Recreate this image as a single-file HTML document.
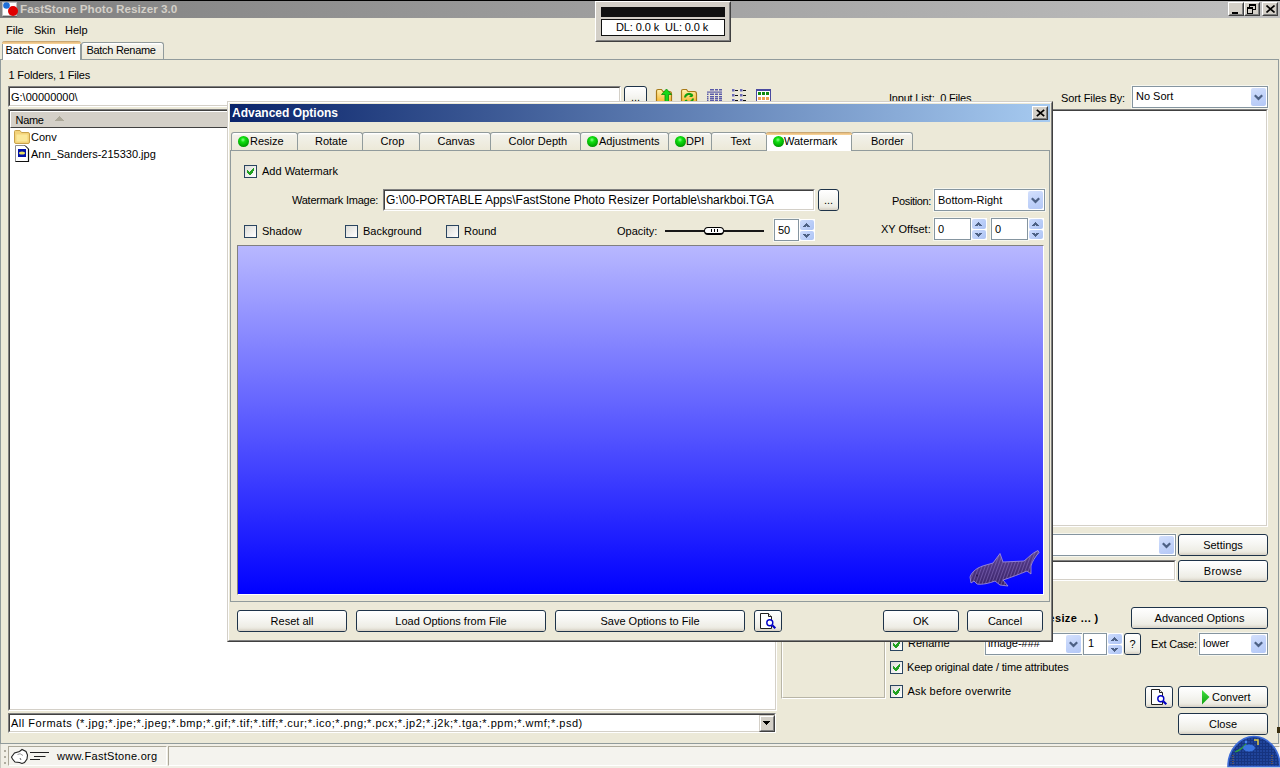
<!DOCTYPE html>
<html><head><meta charset="utf-8">
<style>
*{box-sizing:border-box;margin:0;padding:0}
html,body{width:1280px;height:768px;overflow:hidden;background:#ECE9D8;font-family:"Liberation Sans",sans-serif;font-size:11px;color:#000;position:relative}
.a{position:absolute}
.t{position:absolute;white-space:pre;line-height:13px;font-size:11px}
.b{font-weight:bold}
/* XP button */
.btn{position:absolute;border:1px solid #1E3349;border-radius:3px;background:linear-gradient(#FFFFFF 0%,#F7F7F4 40%,#EEEDE5 80%,#DCD8CC 100%);text-align:center;white-space:pre;font-size:11px}
.btn::after{content:"";position:absolute;left:0;right:0;bottom:0;height:2px;background:linear-gradient(#E3E0D5,#D6D0C5);border-radius:0 0 2px 2px}
.btn span{position:relative;z-index:1}
/* XP checkbox */
.cb{position:absolute;width:13px;height:13px;border:1px solid #2A4560;background:linear-gradient(135deg,#DCDCD7,#FFFFFF)}
/* sunken edit (classic) */
.ed{position:absolute;background:#fff;border-style:solid;border-width:2px;border-color:#808080 #FFFFFF #FFFFFF #808080}
.ed::before{content:"";position:absolute;left:-1px;top:-1px;right:-1px;bottom:-1px;border-style:solid;border-width:1px;border-color:#404040 #D4D0C8 #D4D0C8 #404040}
/* XP combo / edit */
.xcb{position:absolute;background:#fff;border:1px solid #8595A0;box-shadow:0 0 0 1px #F6F6EE}
.xdd{position:absolute;right:1px;top:1px;bottom:1px;width:15px;border-radius:2px;background:linear-gradient(160deg,#D4E0FC 0%,#C3D4FA 45%,#B4C8F6 100%)}
.xdd svg{position:absolute;left:3px;top:50%;margin-top:-3px}
.spin{position:absolute;width:16px;background:#fff}
.spin .u,.spin .d{position:absolute;left:1px;right:1px;border-radius:2px;background:linear-gradient(135deg,#CEDCFC,#B9CDF8 60%,#ADC3F3)}
.spin svg{position:absolute;left:3px}
.tabu{position:absolute;border:1px solid #919B9C;border-bottom:none;border-radius:3px 3px 0 0;background:linear-gradient(#FFFFFF 0px,#FFFFFF 1px,#F2F1EA 2px,#ECE9D8 100%);text-align:center;white-space:pre}
.tabs{position:absolute;border:1px solid #919B9C;border-bottom:none;border-top:none;border-radius:3px 3px 0 0;background:#FFFFFF;text-align:center;white-space:pre}
.tabs::before{content:"";position:absolute;left:-1px;right:-1px;top:0;height:3px;background:linear-gradient(#C9A874 0,#C9A874 1px,#E6B97C 1px,#F9D79C 3px);border-radius:3px 3px 0 0}
.ball{position:absolute;width:11px;height:11px;border-radius:50%;background:radial-gradient(circle at 45% 35%,#8CFF8C 0,#10E010 25%,#00A000 70%,#006000 100%)}
</style></head>
<body>
<!-- ============ MAIN WINDOW ============ -->
<div class="a" style="left:0;top:0;width:1280px;height:1px;background:#000"></div>
<div class="a" style="left:0;top:1px;width:1280px;height:17px;background:linear-gradient(90deg,#808080,#C0C0C0)"></div>
<div class="t b" style="left:20px;top:2px;color:#D4D0C8;font-size:11.7px">FastStone Photo Resizer 3.0</div>
<svg class="a" style="left:2px;top:2px" width="16" height="15" viewBox="0 0 16 15">
 <rect x="1" y="1" width="14" height="14" fill="#404040" opacity="0.5"/>
 <rect x="0.5" y="0.5" width="14" height="13" fill="#FFFFFF" stroke="#C0C0C0" stroke-width="1"/>
 <circle cx="11" cy="9" r="5" fill="#E00000"/>
 <circle cx="4.5" cy="3.5" r="3.3" fill="#1E6FD8"/>
</svg>
<div class="a" style="left:1228px;top:2px;width:16px;height:14px;background:#D4D0C8;border-style:solid;border-width:1px;border-color:#FFFFFF #404040 #404040 #FFFFFF"><div class="a" style="left:0;top:0;right:0;bottom:0;border-style:solid;border-width:1px;border-color:#D4D0C8 #808080 #808080 #D4D0C8"></div><div class="a" style="left:3px;top:9px;width:6px;height:2px;background:#000"></div></div>
<div class="a" style="left:1244px;top:2px;width:16px;height:14px;background:#D4D0C8;border-style:solid;border-width:1px;border-color:#FFFFFF #404040 #404040 #FFFFFF"><div class="a" style="left:0;top:0;right:0;bottom:0;border-style:solid;border-width:1px;border-color:#D4D0C8 #808080 #808080 #D4D0C8"></div>
 <svg class="a" style="left:2px;top:1px" width="9" height="10" viewBox="0 0 9 10" shape-rendering="crispEdges"><path fill="#000" fill-rule="evenodd" d="M2 0H9V6H6V5H8V2H3V3H2Z M0 3H6V10H0Z M1 5V9H5V5Z"/></svg></div>
<div class="a" style="left:1262px;top:2px;width:16px;height:14px;background:#D4D0C8;border-style:solid;border-width:1px;border-color:#FFFFFF #404040 #404040 #FFFFFF"><div class="a" style="left:0;top:0;right:0;bottom:0;border-style:solid;border-width:1px;border-color:#D4D0C8 #808080 #808080 #D4D0C8"></div>
 <svg class="a" style="left:3px;top:2px" width="9" height="8" viewBox="0 0 9 8"><path d="M0.5 0.5L8.5 7.5M8.5 0.5L0.5 7.5" stroke="#000" stroke-width="1.6"/></svg></div>

<div class="a" style="left:595px;top:1px;width:136px;height:41px;background:#D4D0C8;border-style:solid;border-width:1px;border-color:#FFFFFF #404040 #404040 #FFFFFF"><div class="a" style="left:0;top:0;right:0;bottom:0;border-style:solid;border-width:1px;border-color:#D4D0C8 #808080 #808080 #D4D0C8"></div></div>
<div class="a" style="left:601px;top:7px;width:124px;height:10px;background:#111111"></div>
<div class="a" style="left:601px;top:19px;width:124px;height:17px;background:#fff;border:1px solid #101010"></div>
<div class="t" style="left:616px;top:21px;letter-spacing:-0.1px">DL: 0.0 k  UL: 0.0 k</div>
<!-- menu -->
<div class="t" style="left:6px;top:24px">File</div>
<div class="t" style="left:34px;top:24px">Skin</div>
<div class="t" style="left:65px;top:24px">Help</div>

<!-- tab strip -->
<div class="tabu" style="left:81px;top:42px;width:83px;height:17px"><span class="t" style="left:4.5px;top:1px;letter-spacing:-0.3px">Batch Rename</span></div>
<div class="a" style="left:0px;top:59px;width:1279px;height:685px;border:1px solid #919B9C"></div>
<div class="tabs" style="left:2px;top:41px;width:79px;height:19px"><span class="t" style="left:2.5px;top:3px">Batch Convert</span></div>

<div class="t" style="left:8.5px;top:68.5px;letter-spacing:-0.15px">1 Folders, 1 Files</div>
<div class="ed" style="left:8px;top:86px;width:613px;height:21px"><span class="t" style="left:1px;top:3px">G:\00000000\</span></div>
<div class="btn" style="left:624px;top:86px;width:23px;height:21px"><span class="t" style="left:0;right:0;top:4px">...</span></div>

<svg class="a" style="left:655px;top:88px" width="120" height="14" viewBox="0 0 120 14">
 <defs><linearGradient id="fy" x1="0" y1="0" x2="0" y2="1"><stop offset="0" stop-color="#FFF2B0"/><stop offset="1" stop-color="#F8B830"/></linearGradient></defs>
 <path d="M1.5 14V3Q1.5 1.5 3 1.5H6.5L8 3.5H14.5Q16.5 3.5 16.5 6V14" fill="url(#fy)" stroke="#A87A18" stroke-width="1.2"/>
 <path d="M11.5 1L16.5 6.5H13.5V14H10V6.5H6.5Z" fill="#18D818" stroke="#089008" stroke-width="0.8"/>
 <path d="M26.5 14V3Q26.5 1.5 28 1.5H31.5L33 3.5H39.5Q41.5 3.5 41.5 6V14" fill="url(#fy)" stroke="#A87A18" stroke-width="1.2"/>
 <path d="M30 9.5A4 4 0 0 1 37.5 8M38 10.5A4 4 0 0 1 30.5 12" fill="none" stroke="#10A010" stroke-width="2"/>
 <path d="M37.5 5.5V9H34Z" fill="#10A010"/>
 <g fill="#5A5AA8">
  <rect x="55" y="1" width="4" height="1.5"/><rect x="60" y="1" width="3" height="1.5"/><rect x="64" y="1" width="3" height="1.5"/>
  <rect x="52" y="3.5" width="15" height="1.2"/>
  <rect x="52" y="5.5" width="1.5" height="1.5"/><rect x="55" y="5.5" width="4" height="1.5"/><rect x="60" y="5.5" width="3" height="1.5"/><rect x="64" y="5.5" width="3" height="1.5"/>
  <rect x="52" y="8" width="1.5" height="1.5"/><rect x="55" y="8" width="4" height="1.5"/><rect x="60" y="8" width="3" height="1.5"/><rect x="64" y="8" width="3" height="1.5"/>
  <rect x="52" y="10" width="1.5" height="1.5"/><rect x="55" y="10" width="4" height="1.5"/><rect x="60" y="10" width="3" height="1.5"/><rect x="64" y="10" width="3" height="1.5"/>
  <rect x="52" y="12" width="1.5" height="1.5"/><rect x="55" y="12" width="4" height="1.5"/><rect x="60" y="12" width="3" height="1.5"/><rect x="64" y="12" width="3" height="1.5"/>
 </g>
 <g fill="#6A6AB8"><rect x="77" y="1" width="2.5" height="2.5"/><rect x="85" y="1" width="2.5" height="2.5"/><rect x="77" y="6" width="2.5" height="2.5"/><rect x="85" y="6" width="2.5" height="2.5"/><rect x="77" y="11" width="2.5" height="2.5"/><rect x="85" y="11" width="2.5" height="2.5"/></g>
 <g fill="#101010"><rect x="80" y="2" width="3" height="1"/><rect x="88" y="2" width="3" height="1"/><rect x="80" y="7" width="3" height="1"/><rect x="88" y="7" width="3" height="1"/><rect x="80" y="12" width="3" height="1"/><rect x="88" y="12" width="3" height="1"/></g>
 <path d="M101.5 14V1.5H115.5V14" fill="#fff" stroke="#4A4AA0" stroke-width="1"/>
 <rect x="101" y="1" width="15" height="2" fill="#4A4AA0"/>
 <g fill="#108A10"><rect x="103" y="4" width="3" height="3"/><rect x="107" y="4" width="3" height="3"/><rect x="111" y="4" width="3" height="3"/></g>
 <g fill="#F0A050"><rect x="103" y="9" width="3" height="3"/><rect x="107" y="9" width="3" height="3"/><rect x="111" y="9" width="3" height="3"/></g>
</svg>
<!-- file list -->
<div class="ed" style="left:8px;top:109px;width:769px;height:602px"></div>
<div class="a" style="left:10px;top:111px;width:765px;height:17px;background:#D4D0C8;border-style:solid;border-width:1px;border-color:#FFFFFF #808080 #404040 #FFFFFF"></div>
<div class="t" style="left:15.5px;top:114px;letter-spacing:-0.3px">Name</div>
<svg class="a" style="left:55px;top:116px" width="9" height="5" viewBox="0 0 9 5" shape-rendering="crispEdges"><path fill="#ACA899" d="M4 0h1v1h1v1h1v1h1v1h1v1H0V4h1V3h1V2h1V1h1z"/></svg>
<svg class="a" style="left:14px;top:130px" width="16" height="14" viewBox="0 0 16 14">
 <path d="M0.5 1.5Q0.5 0.5 1.5 0.5H6L7.5 2.5H14Q15.5 2.5 15.5 4V12Q15.5 13.5 14 13.5H2Q0.5 13.5 0.5 12Z" fill="#F3D37A" stroke="#C9A24A"/>
 <path d="M2.5 4.5H13.5V11.5H2.5Z" fill="#FBE89A"/>
</svg>
<svg class="a" style="left:15px;top:145px" width="15" height="17" viewBox="0 0 15 17">
 <path d="M0.5 0.5H10L13.5 4V16.5H0.5Z" fill="#fff" stroke="#909090"/>
 <path d="M13.5 4V16.5H0.5" fill="none" stroke="#101010" stroke-width="1.2"/>
 <path d="M10 0.5L13.5 4" stroke="#101010"/>
 <rect x="3" y="4" width="8" height="8" fill="#0010A8"/>
 <ellipse cx="7" cy="8" rx="3" ry="1.6" fill="#E8E060"/>
</svg>
<div class="t" style="left:31px;top:131px">Conv</div>
<div class="t" style="left:31px;top:148px">Ann_Sanders-215330.jpg</div>

<!-- format combo -->
<div class="ed" style="left:8px;top:713px;width:768px;height:20px"><span class="t" style="left:1px;top:2px;letter-spacing:0.52px">All Formats (*.jpg;*.jpe;*.jpeg;*.bmp;*.gif;*.tif;*.tiff;*.cur;*.ico;*.png;*.pcx;*.jp2;*.j2k;*.tga;*.ppm;*.wmf;*.psd)</span></div>
<div class="a" style="left:759px;top:715px;width:16px;height:17px;background:#D4D0C8;border-style:solid;border-width:1px;border-color:#D4D0C8 #404040 #404040 #D4D0C8"><div class="a" style="left:0;top:0;right:0;bottom:0;border-style:solid;border-width:1px;border-color:#FFFFFF #808080 #808080 #FFFFFF"></div><svg class="a" style="left:3px;top:5px" width="7" height="4" viewBox="0 0 7 4" shape-rendering="crispEdges"><path fill="#000" d="M0 0h7v1H6v1H5v1H4v1H3V3H2V2H1V1H0z"/></svg></div>

<!-- group box -->
<div class="a" style="left:781px;top:600px;width:105px;height:99px;border-style:solid;border-width:1px;border-color:#B8B5A6 #FFFFFF #FFFFFF #B8B5A6"><div class="a" style="left:0;top:0;right:0;bottom:0;border-style:solid;border-width:1px;border-color:#FFFFFF #B8B5A6 #B8B5A6 #FFFFFF"></div></div>

<!-- right panel -->
<div class="t" style="left:889px;top:92px;letter-spacing:-0.2px">Input List:  0 Files</div>
<div class="t" style="left:1061px;top:91.5px;letter-spacing:-0.1px">Sort Files By:</div>
<div class="xcb" style="left:1132px;top:86px;width:136px;height:22px"><span class="t" style="left:3px;top:3px">No Sort</span><div class="xdd"><svg width="9" height="7" viewBox="0 0 9 7"><path d="M0.8 1.2L4.5 4.9L8.2 1.2" fill="none" stroke="#4D6185" stroke-width="2.2"/></svg></div></div>
<div class="ed" style="left:1030px;top:109px;width:238px;height:418px"></div>
<div class="xcb" style="left:1030px;top:534px;width:146px;height:22px"><div class="xdd"><svg width="9" height="7" viewBox="0 0 9 7"><path d="M0.8 1.2L4.5 4.9L8.2 1.2" fill="none" stroke="#4D6185" stroke-width="2.2"/></svg></div></div>
<div class="btn" style="left:1178px;top:534px;width:90px;height:22px"><span class="t" style="left:0;right:0;top:4px">Settings</span></div>
<div class="ed" style="left:1030px;top:560px;width:146px;height:21px"></div>
<div class="btn" style="left:1178px;top:560px;width:90px;height:22px"><span class="t" style="left:0;right:0;top:4px;letter-spacing:0.3px">Browse</span></div>

<div class="t b" style="left:1032.5px;top:612px;letter-spacing:0.4px">( Resize ... )</div>
<div class="btn" style="left:1131px;top:607px;width:137px;height:22px"><span class="t" style="left:0;right:0;top:4px">Advanced Options</span></div>
<div class="cb on" style="left:890px;top:638px"><svg class="a" style="left:2px;top:2px" width="7" height="7" viewBox="0 0 7 7" shape-rendering="crispEdges"><path fill="#21A121" d="M6 0h1v3h-1zM5 1h1v4h-1zM0 2h1v3h-1zM4 2h1v4h-1zM1 3h1v3h-1zM3 3h1v4h-1zM2 4h1v3h-1z"/></svg></div>
<div class="t" style="left:908px;top:637px">Rename</div>
<div class="xcb" style="left:985px;top:633px;width:98px;height:22px"><span class="t" style="left:2px;top:3px">image-###</span><div class="xdd"><svg width="9" height="7" viewBox="0 0 9 7"><path d="M0.8 1.2L4.5 4.9L8.2 1.2" fill="none" stroke="#4D6185" stroke-width="2.2"/></svg></div></div>
<div class="xcb" style="left:1083px;top:633px;width:24px;height:22px"><span class="t" style="left:4px;top:3px">1</span></div>
<div class="spin" style="left:1107px;top:633px;height:22px"><div class="u" style="top:1px;height:10px"><svg style="top:3px" width="7" height="4" viewBox="0 0 7 4" shape-rendering="crispEdges"><path fill="#4D6185" d="M3 0h1v1h1v1h1v1h1v1H4V3H3v1H0V3h1V2h1V1h1z"/></svg></div><div class="d" style="top:12px;height:9px"><svg style="top:2.5px" width="7" height="4" viewBox="0 0 7 4" shape-rendering="crispEdges"><path fill="#4D6185" d="M0 0h3v1h1V0h3v1H6v1H5v1H4v1H3V3H2V2H1V1H0z"/></svg></div></div>
<div class="btn" style="left:1124px;top:633px;width:17px;height:22px"><span class="t" style="left:0;right:0;top:4px">?</span></div>
<div class="t" style="left:1151px;top:638px;letter-spacing:-0.2px">Ext Case:</div>
<div class="xcb" style="left:1199px;top:633px;width:69px;height:22px"><span class="t" style="left:3px;top:3px">lower</span><div class="xdd"><svg width="9" height="7" viewBox="0 0 9 7"><path d="M0.8 1.2L4.5 4.9L8.2 1.2" fill="none" stroke="#4D6185" stroke-width="2.2"/></svg></div></div>
<div class="cb on" style="left:890px;top:661px"><svg class="a" style="left:2px;top:2px" width="7" height="7" viewBox="0 0 7 7" shape-rendering="crispEdges"><path fill="#21A121" d="M6 0h1v3h-1zM5 1h1v4h-1zM0 2h1v3h-1zM4 2h1v4h-1zM1 3h1v3h-1zM3 3h1v4h-1zM2 4h1v3h-1z"/></svg></div>
<div class="t" style="left:907px;top:661px;letter-spacing:-0.15px">Keep original date / time attributes</div>
<div class="cb on" style="left:890px;top:685px"><svg class="a" style="left:2px;top:2px" width="7" height="7" viewBox="0 0 7 7" shape-rendering="crispEdges"><path fill="#21A121" d="M6 0h1v3h-1zM5 1h1v4h-1zM0 2h1v3h-1zM4 2h1v4h-1zM1 3h1v3h-1zM3 3h1v4h-1zM2 4h1v3h-1z"/></svg></div>
<div class="t" style="left:907.5px;top:685px;letter-spacing:0.18px">Ask before overwrite</div>
<div class="btn" style="left:1145px;top:686px;width:28px;height:22px"></div><svg class="a" style="left:1151px;top:689px" width="17" height="17" viewBox="0 0 17 17"><path d="M0.5 0.5H8.5L11.5 3.5V15.5H0.5Z" fill="#fff" stroke="#202020"/><path d="M8.5 0.5V3.5H11.5" fill="#E8E8E8" stroke="#202020"/><path d="M12.3 12.3L15.3 15.3" stroke="#0000C0" stroke-width="2.2"/><circle cx="9.8" cy="9.8" r="3" fill="#fff" stroke="#0000C8" stroke-width="1.4"/></svg>
<div class="btn" style="left:1178px;top:686px;width:90px;height:22px"></div><svg class="a" style="left:1202px;top:690px" width="8" height="15" viewBox="0 0 8 15"><defs><linearGradient id="gt" x1="0" y1="0" x2="0" y2="1"><stop offset="0" stop-color="#40E040"/><stop offset="1" stop-color="#10A010"/></linearGradient></defs><path d="M0 0L7.5 7L0 14.5Z" fill="url(#gt)"/></svg><div class="t" style="left:1212px;top:690.5px">Convert</div>
<div class="btn" style="left:1178px;top:713px;width:90px;height:22px"><span class="t" style="left:0;right:0;top:4px">Close</span></div>

<!-- status bar -->
<div class="a" style="left:0;top:744px;width:1280px;height:24px;background:#F1EFE6"></div>
<div class="a" style="left:0;top:744px;width:1px;height:24px;background:#C8C8C0"></div>
<div class="a" style="left:4px;top:750px;width:2px;height:2px;background:#B0ADA0"></div>
<div class="a" style="left:4px;top:756px;width:2px;height:2px;background:#B0ADA0"></div>
<div class="a" style="left:4px;top:762px;width:2px;height:2px;background:#B0ADA0"></div>
<div class="a" style="left:8px;top:746px;width:159px;height:20px;border-style:solid;border-width:1px;border-color:#ACA899 #FFFFFF #FFFFFF #ACA899;background:#F4F3EE"></div>
<div class="a" style="left:168px;top:746px;width:1112px;height:20px;border-style:solid;border-width:1px;border-color:#ACA899 #FFFFFF #FFFFFF #ACA899;background:#F4F3EE"></div>
<svg class="a" style="left:10px;top:748px" width="42" height="17" viewBox="0 0 42 17">
 <path d="M1.5 9L4.5 5L9.5 3.5L12 1.5L16 3.5L17.5 7L17 11L14.5 14.5L12 15.5L9.5 14.5L5 14L2.5 11Z" fill="#fff" stroke="#202020" stroke-width="1.1"/>
 <path d="M7.5 6.5Q10 4.5 13 7.5" fill="none" stroke="#808080" stroke-width="0.8"/>
 <path d="M10 10L11 12" stroke="#404040" stroke-width="0.8"/>
 <path d="M20 4.5H39M24 8.5H35.5M20 11.5H30" stroke="#202020" stroke-width="1"/>
</svg>
<div class="t" style="left:57px;top:750px;letter-spacing:0.3px">www.FastStone.org</div>
<svg class="a" style="left:1227px;top:735px" width="53" height="33" viewBox="0 0 53 33">
 <defs><pattern id="grid" width="3" height="3" patternUnits="userSpaceOnUse"><rect width="3" height="3" fill="#163480"/><rect width="2" height="2" fill="#20449A"/></pattern></defs>
 <path d="M1 31.5A26 30 0 0 1 53 31.5Z" fill="url(#grid)" stroke="#3D6CD8" stroke-width="1.6"/>
 <path d="M8 17Q14 15 19 9" fill="none" stroke="#30A040" stroke-width="1.2"/>
 <ellipse cx="22" cy="13" rx="6" ry="3.5" fill="#3A74E0"/>
 <circle cx="19" cy="7" r="1.4" fill="#4A84F0"/>
 <path d="M27 5H31V10" fill="none" stroke="#E8D040" stroke-width="1.4"/>
 <path d="M6 20v9M45 20v9" stroke="#A07030" stroke-width="1" stroke-dasharray="1 1"/>
</svg>
<div class="a" style="left:1277px;top:727px;width:3px;height:6px;background:#3A3010"></div>

<!-- ============ DIALOG ============ -->
<div class="a" style="left:227px;top:101px;width:826px;height:541px;background:#ECE9D8;border-style:solid;border-width:1px;border-color:#D4D0C8 #404040 #404040 #D4D0C8">
 <div class="a" style="left:0;top:0;right:0;bottom:0;border-style:solid;border-width:1px;border-color:#FFFFFF #808080 #808080 #FFFFFF"></div>
</div>
<div class="a" style="left:230px;top:104px;width:820px;height:18px;background:linear-gradient(90deg,#0A246A,#A6CAF0)"></div>
<div class="t b" style="left:232px;top:107px;color:#fff;font-size:12px">Advanced Options</div>
<div class="a" style="left:1032px;top:106px;width:16px;height:14px;background:#D4D0C8;border-style:solid;border-width:1px;border-color:#FFFFFF #404040 #404040 #FFFFFF"><div class="a" style="left:0;top:0;right:0;bottom:0;border-style:solid;border-width:1px;border-color:#D4D0C8 #808080 #808080 #D4D0C8"></div><svg class="a" style="left:3px;top:2px" width="9" height="8" viewBox="0 0 9 8"><path d="M0.8 0.8L8.2 7.2M8.2 0.8L0.8 7.2" stroke="#000" stroke-width="1.7"/></svg></div>

<!-- dialog tabs -->
<div class="tabu" style="left:231px;top:132px;width:67px;height:18px"></div>
<div class="tabu" style="left:297px;top:132px;width:66px;height:18px"></div>
<div class="tabu" style="left:362px;top:132px;width:58px;height:18px"></div>
<div class="tabu" style="left:419px;top:132px;width:72px;height:18px"></div>
<div class="tabu" style="left:490px;top:132px;width:91px;height:18px"></div>
<div class="tabu" style="left:580px;top:132px;width:89px;height:18px"></div>
<div class="tabu" style="left:668px;top:132px;width:44px;height:18px"></div>
<div class="tabu" style="left:711px;top:132px;width:56px;height:18px"></div>
<div class="tabu" style="left:851px;top:132px;width:62px;height:18px"></div>
<div class="a" style="left:230px;top:150px;width:820px;height:452px;border:1px solid #919B9C;background:#ECE9D8"></div>
<div class="tabs" style="left:766px;top:132px;width:86px;height:19px"></div>
<div class="ball" style="left:238px;top:136px"></div>
<div class="ball" style="left:587px;top:136px"></div>
<div class="ball" style="left:675px;top:136px"></div>
<div class="ball" style="left:773px;top:136px"></div>
<div class="t" style="left:250px;top:135px">Resize</div>
<div class="t" style="left:315px;top:135px">Rotate</div>
<div class="t" style="left:380.5px;top:135px">Crop</div>
<div class="t" style="left:437.5px;top:135px">Canvas</div>
<div class="t" style="left:508.5px;top:135px">Color Depth</div>
<div class="t" style="left:599px;top:135px">Adjustments</div>
<div class="t" style="left:686px;top:135px">DPI</div>
<div class="t" style="left:730.5px;top:135px">Text</div>
<div class="t" style="left:784px;top:135px">Watermark</div>
<div class="t" style="left:871px;top:135px">Border</div>

<div class="cb on" style="left:244px;top:165px"><svg class="a" style="left:2px;top:2px" width="7" height="7" viewBox="0 0 7 7" shape-rendering="crispEdges"><path fill="#21A121" d="M6 0h1v3h-1zM5 1h1v4h-1zM0 2h1v3h-1zM4 2h1v4h-1zM1 3h1v3h-1zM3 3h1v4h-1zM2 4h1v3h-1z"/></svg></div>
<div class="t" style="left:262px;top:165px">Add Watermark</div>
<div class="t" style="left:292px;top:194px;letter-spacing:-0.25px">Watermark Image:</div>
<div class="ed" style="left:383px;top:189px;width:432px;height:22px"><span class="t" style="left:1px;top:3px;font-size:12px">G:\00-PORTABLE Apps\FastStone Photo Resizer Portable\sharkboi.TGA</span></div>
<div class="btn" style="left:818px;top:189px;width:21px;height:22px"><span class="t" style="left:0;right:0;top:4px">...</span></div>
<div class="t" style="left:892px;top:195px;letter-spacing:-0.35px">Position:</div>
<div class="xcb" style="left:934px;top:189px;width:111px;height:22px"><span class="t" style="left:3px;top:4px">Bottom-Right</span><div class="xdd"><svg width="9" height="7" viewBox="0 0 9 7"><path d="M0.8 1.2L4.5 4.9L8.2 1.2" fill="none" stroke="#4D6185" stroke-width="2.2"/></svg></div></div>

<div class="cb" style="left:244px;top:225px"></div>
<div class="t" style="left:262px;top:225px">Shadow</div>
<div class="cb" style="left:345px;top:225px"></div>
<div class="t" style="left:363px;top:225px">Background</div>
<div class="cb" style="left:446px;top:225px"></div>
<div class="t" style="left:464px;top:225px">Round</div>
<div class="t" style="left:617px;top:225px">Opacity:</div>
<div class="a" style="left:665px;top:230px;width:99px;height:2px;background:#181818"></div>
<div class="a" style="left:704px;top:227px;width:20px;height:8px;border:1px solid #000;border-bottom-width:2px;border-radius:4px;background:#FFFFFF"></div>
<div class="a" style="left:711px;top:229px;width:1px;height:3px;background:#000"></div>
<div class="a" style="left:714px;top:229px;width:1px;height:3px;background:#000"></div>
<div class="a" style="left:717px;top:229px;width:1px;height:3px;background:#000"></div>
<div class="xcb" style="left:774px;top:219px;width:25px;height:22px"><span class="t" style="left:3px;top:4px">50</span></div><div class="spin" style="left:799px;top:219px;height:22px"><div class="u" style="top:1px;height:10px"><svg style="top:3px" width="7" height="4" viewBox="0 0 7 4" shape-rendering="crispEdges"><path fill="#4D6185" d="M3 0h1v1h1v1h1v1h1v1H4V3H3v1H0V3h1V2h1V1h1z"/></svg></div><div class="d" style="top:12px;height:9px"><svg style="top:2.5px" width="7" height="4" viewBox="0 0 7 4" shape-rendering="crispEdges"><path fill="#4D6185" d="M0 0h3v1h1V0h3v1H6v1H5v1H4v1H3V3H2V2H1V1H0z"/></svg></div></div>
<div class="xcb" style="left:934px;top:218px;width:37px;height:22px"><span class="t" style="left:3px;top:4px">0</span></div><div class="spin" style="left:971px;top:218px;height:22px"><div class="u" style="top:1px;height:10px"><svg style="top:3px" width="7" height="4" viewBox="0 0 7 4" shape-rendering="crispEdges"><path fill="#4D6185" d="M3 0h1v1h1v1h1v1h1v1H4V3H3v1H0V3h1V2h1V1h1z"/></svg></div><div class="d" style="top:12px;height:9px"><svg style="top:2.5px" width="7" height="4" viewBox="0 0 7 4" shape-rendering="crispEdges"><path fill="#4D6185" d="M0 0h3v1h1V0h3v1H6v1H5v1H4v1H3V3H2V2H1V1H0z"/></svg></div></div>
<div class="xcb" style="left:991px;top:218px;width:37px;height:22px"><span class="t" style="left:3px;top:4px">0</span></div><div class="spin" style="left:1028px;top:218px;height:22px"><div class="u" style="top:1px;height:10px"><svg style="top:3px" width="7" height="4" viewBox="0 0 7 4" shape-rendering="crispEdges"><path fill="#4D6185" d="M3 0h1v1h1v1h1v1h1v1H4V3H3v1H0V3h1V2h1V1h1z"/></svg></div><div class="d" style="top:12px;height:9px"><svg style="top:2.5px" width="7" height="4" viewBox="0 0 7 4" shape-rendering="crispEdges"><path fill="#4D6185" d="M0 0h3v1h1V0h3v1H6v1H5v1H4v1H3V3H2V2H1V1H0z"/></svg></div></div>
<div class="t" style="left:881px;top:223px">XY Offset:</div>

<div class="a" style="left:237px;top:245px;width:807px;height:350px;border-style:solid;border-width:1px;border-color:#808080 #FFFFFF #FFFFFF #808080;background:linear-gradient(#B8B8FF,#0000FF)"></div>

<svg class="a" style="left:960px;top:540px" width="90" height="55" viewBox="960 540 90 55">
 <defs><linearGradient id="sg" x1="0" y1="0" x2="0.3" y2="1"><stop offset="0" stop-color="#6A55A0"/><stop offset="0.5" stop-color="#4E3682"/><stop offset="1" stop-color="#3A2468"/></linearGradient>
 <pattern id="sp" width="3" height="3" patternUnits="userSpaceOnUse" patternTransform="rotate(20)"><rect width="3" height="3" fill="none"/><rect width="1" height="3" fill="#9A80D0" opacity="0.45"/></pattern></defs>
 <path d="M970,577 C972,571 978,567 986,565 L993,563 L1000,553.5 L1003,562 L1024,561 C1028,558 1032,553 1038,550.5 L1039,552.5 C1035,557 1032,562 1031,566 L1031,574 L1027,571 C1020,574 1012,577 1003,580 L1008,586 L1000,585 L995,581 C990,583 982,585 977,584 L974,581 L971,583 Z" fill="url(#sg)" stroke="#A898E0" stroke-width="0.8"/>
 <path d="M970,577 C972,571 978,567 986,565 L993,563 L1000,553.5 L1003,562 L1024,561 C1028,558 1032,553 1038,550.5 L1039,552.5 C1035,557 1032,562 1031,566 L1031,574 L1027,571 C1020,574 1012,577 1003,580 L1008,586 L1000,585 L995,581 C990,583 982,585 977,584 L974,581 L971,583 Z" fill="url(#sp)"/>
 <circle cx="977" cy="575.5" r="1" fill="#2A1850"/>
</svg>
<div class="btn" style="left:237px;top:610px;width:110px;height:22px"><span class="t" style="left:0;right:0;top:4px">Reset all</span></div>
<div class="btn" style="left:356px;top:610px;width:190px;height:22px"><span class="t" style="left:0;right:0;top:4px">Load Options from File</span></div>
<div class="btn" style="left:555px;top:610px;width:190px;height:22px"><span class="t" style="left:0;right:0;top:4px">Save Options to File</span></div>
<div class="btn" style="left:754px;top:610px;width:28px;height:22px"></div><svg class="a" style="left:760px;top:613px" width="17" height="17" viewBox="0 0 17 17"><path d="M0.5 0.5H8.5L11.5 3.5V15.5H0.5Z" fill="#fff" stroke="#202020"/><path d="M8.5 0.5V3.5H11.5" fill="#E8E8E8" stroke="#202020"/><path d="M12.3 12.3L15.3 15.3" stroke="#0000C0" stroke-width="2.2"/><circle cx="9.8" cy="9.8" r="3" fill="#fff" stroke="#0000C8" stroke-width="1.4"/></svg>
<div class="btn" style="left:883px;top:610px;width:76px;height:22px"><span class="t" style="left:0;right:0;top:4px">OK</span></div>
<div class="btn" style="left:967px;top:610px;width:76px;height:22px"><span class="t" style="left:0;right:0;top:4px">Cancel</span></div>
</body></html>
